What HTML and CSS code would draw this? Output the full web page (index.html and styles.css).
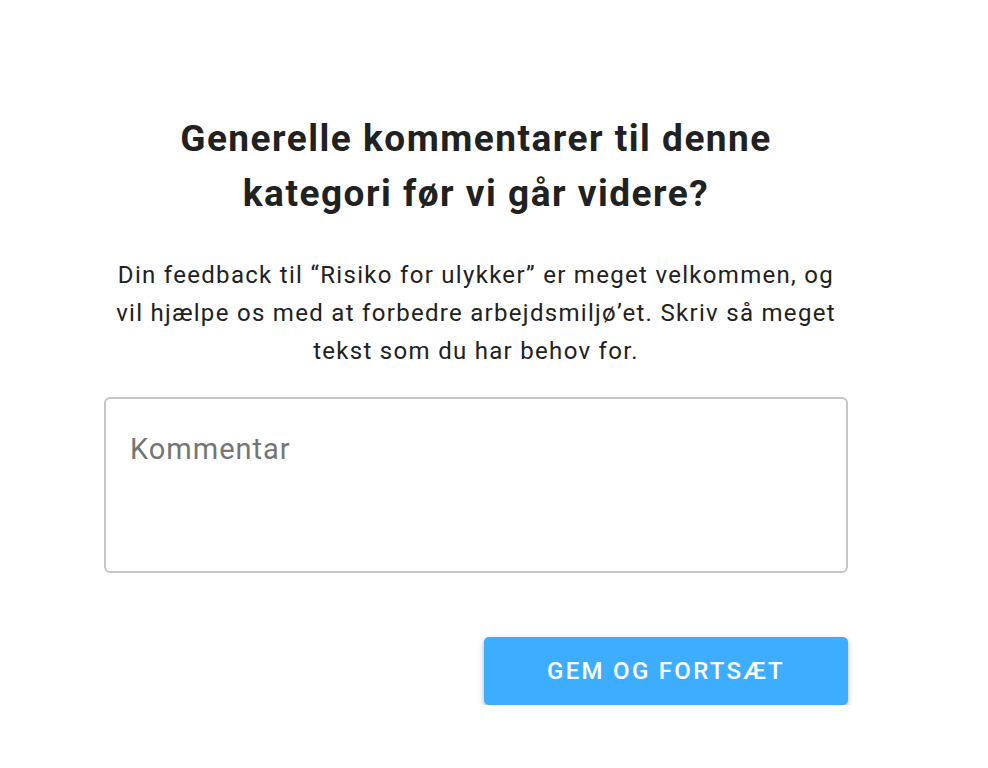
FILE: index.html
```html
<!DOCTYPE html>
<html lang="da">
<head>
<meta charset="utf-8">
<link rel="stylesheet" href="styles.css">
</head>
<body>
<main class="panel">
  <h1 class="title">Generelle kommentarer til denne<br>kategori før vi går videre?</h1>
  <p class="lead">Din feedback til “Risiko for ulykker” er meget velkommen, og vil hjælpe os med at forbedre arbejdsmiljø’et. Skriv så meget tekst som du har behov for.</p>
  <textarea class="comment" placeholder="Kommentar"></textarea>
  <div class="actions">
    <button class="btn" type="button">GEM OG FORTSÆT</button>
  </div>
</main>
</body>
</html>
```
FILE: styles.css
```css
html, body {
  margin: 0;
  padding: 0;
  background: #ffffff;
}
body {
  font-family: Roboto, "Liberation Sans", sans-serif;
  color: #212121;
}
.panel {
  width: 744px;
  margin-left: 104px;
  padding-top: 111px;
  display: flex;
  flex-direction: column;
  align-items: center;
}
.title {
  margin: 0;
  font-size: 37px;
  font-weight: 700;
  line-height: 55px;
  letter-spacing: 1.5px;
  text-align: center;
  color: #212121;
}
.lead {
  margin: 35px 0 0;
  width: 100%;
  font-size: 24px;
  line-height: 38px;
  letter-spacing: 1.3px;
  text-align: center;
  color: #212121;
}
.comment {
  box-sizing: border-box;
  display: block;
  margin-top: 27px;
  width: 744px;
  height: 176px;
  border: 2px solid #c6c6c6;
  border-radius: 6px;
  padding: 32px 24px;
  font-family: Roboto, "Liberation Sans", sans-serif;
  font-size: 29px;
  line-height: 36px;
  letter-spacing: 1px;
  resize: none;
  outline: none;
  color: #212121;
}
.comment::placeholder {
  color: #757575;
}
.actions {
  width: 100%;
  display: flex;
  justify-content: flex-end;
  margin-top: 64px;
}
.btn {
  width: 364px;
  height: 68px;
  border: 0;
  border-radius: 5px;
  background: #3daeff;
  color: #ffffff;
  font-family: Roboto, "Liberation Sans", sans-serif;
  font-size: 24px;
  font-weight: 500;
  letter-spacing: 2.3px;
  box-shadow: 0 3px 6px rgba(0,0,0,0.22), 0 1px 3px rgba(0,0,0,0.14);
  cursor: pointer;
}
```
